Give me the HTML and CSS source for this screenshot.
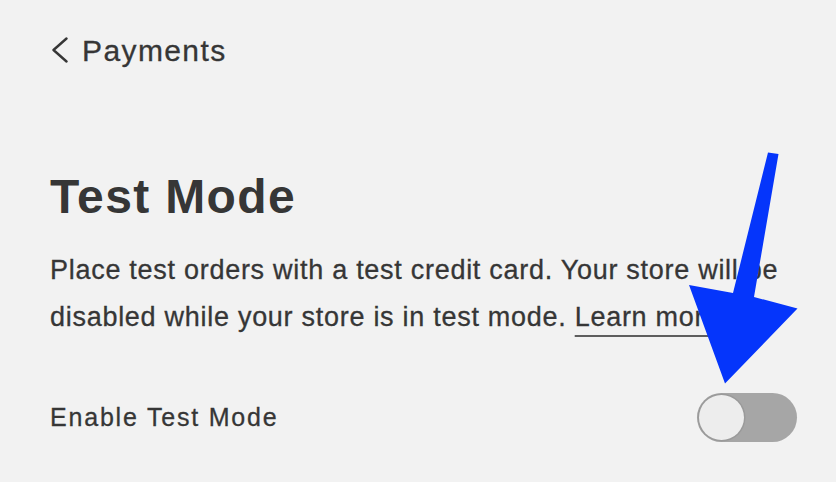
FILE: index.html
```html
<!DOCTYPE html>
<html lang="en">
<head>
<meta charset="utf-8">
<title>Test Mode</title>
<link rel="stylesheet" href="styles.css">
</head>
<body>
<main class="page">
  <a class="back" href="#">
    <svg class="chev" width="18" height="26" viewBox="0 0 18 26" aria-hidden="true"><polyline points="15.5,1.5 2.5,13 15.5,24.5" fill="none" stroke="#363636" stroke-width="2.4" stroke-linecap="round" stroke-linejoin="round"/></svg>
    <span>Payments</span>
  </a>
  <h1 class="title">Test Mode</h1>
  <p class="desc">Place test orders with a test credit card. Your store will be disabled while your store is in test mode. <a class="learn" href="#">Learn more</a></p>
  <div class="row">
    <span class="label">Enable Test Mode</span>
    <span class="toggle"><span class="knob"></span></span>
  </div>
</main>
<svg class="arrow" width="836" height="482" viewBox="0 0 836 482" aria-hidden="true"><polygon points="768,152.5 778.5,154 754,297 797.5,308.5 725,383.5 689,285 733,293" fill="#0535fb"/></svg>
</body>
</html>
```

FILE: styles.css
```css
html, body {
  margin: 0;
  padding: 0;
  background: #f2f2f2;
}
body {
  font-family: "Liberation Sans", Arial, sans-serif;
  color: #363636;
  width: 836px;
  height: 482px;
  overflow: hidden;
  position: relative;
}
.page {
  padding: 33px 39px 0 50px;
  display: flex;
  flex-direction: column;
}
.back {
  display: flex;
  align-items: center;
  gap: 13px;
  color: #363636;
  text-decoration: none;
  font-size: 30px;
  line-height: 36px;
  height: 36px;
  letter-spacing: 1.4px;
  padding-left: 1px;
  -webkit-text-stroke: 0.3px #363636;
}
.chev {
  display: block;
  margin-top: -2px;
}
.title {
  margin: 100px 0 0 0;
  font-size: 48px;
  line-height: 56px;
  font-weight: bold;
  letter-spacing: 1.35px;
  color: #363636;
}
.desc {
  margin: 22px 0 0 0;
  font-size: 27px;
  line-height: 47px;
  letter-spacing: 0.72px;
  max-width: 745px;
  -webkit-text-stroke: 0.3px #363636;
}
.learn {
  color: #363636;
  text-decoration: underline;
  text-decoration-thickness: 2px;
  text-underline-offset: 9px;
  text-decoration-color: #5e5e5e;
}
.row {
  margin-top: 51px;
  display: flex;
  align-items: center;
  justify-content: space-between;
  height: 50px;
}
.label {
  font-size: 25px;
  line-height: 50px;
  letter-spacing: 1.8px;
  -webkit-text-stroke: 0.3px #363636;
}
.toggle {
  width: 100px;
  height: 49px;
  box-sizing: border-box;
  border-radius: 25px;
  background: #a6a6a6;
  display: flex;
  align-items: center;
  padding: 0 1.5px;
}
.knob {
  width: 45px;
  height: 45px;
  border-radius: 50%;
  background: #ededed;
  box-shadow: 0 0 0 1.5px #9a9a9a;
}
.arrow {
  position: absolute;
  left: 0;
  top: 0;
  pointer-events: none;
}
```
